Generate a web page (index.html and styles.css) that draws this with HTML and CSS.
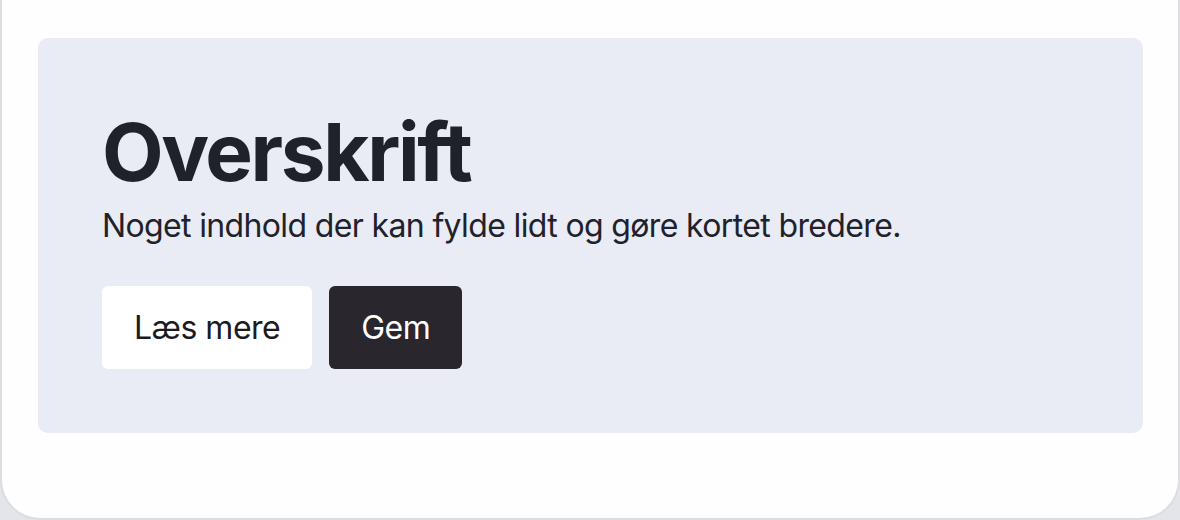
FILE: index.html
```html
<!DOCTYPE html>
<html lang="da">
<head>
<meta charset="utf-8">
<title>Kort</title>
<link rel="stylesheet" href="styles.css">
</head>
<body>
<div class="frame">
  <section class="card">
    <h1 class="card-title">Overskrift</h1>
    <p class="card-text">Noget indhold der kan fylde lidt og gøre kortet bredere.</p>
    <div class="card-actions">
      <button class="btn btn-light" type="button">Læs mere</button>
      <button class="btn btn-dark" type="button">Gem</button>
    </div>
  </section>
</div>
</body>
</html>
```

FILE: styles.css
```css
* { box-sizing: border-box; }

html, body {
  margin: 0;
  padding: 0;
}

body {
  width: 1180px;
  height: 520px;
  background: #e4e5ea;
  font-family: Inter, "Noto Sans", sans-serif;
  overflow: hidden;
}

.frame {
  width: 1180px;
  background: #fefdff;
  border: 2px solid #dcdde1;
  border-top: none;
  border-radius: 0 0 40px 40px;
  padding: 38px 35px 85px 36px;
}

.card {
  background: #e9ebf5;
  border-radius: 10px;
  padding: 64px;
}

.card-title {
  margin: 0;
  font-size: 80px;
  line-height: 100px;
  font-weight: 700;
  color: #1f222a;
  letter-spacing: -2.4px;
}

.card-text {
  margin: 0 0 36px;
  font-size: 32px;
  line-height: 48px;
  color: #1f222a;
  letter-spacing: -0.64px;
}

.card-actions {
  display: flex;
  gap: 17px;
}

.btn {
  height: 83px;
  padding: 0 32px;
  border: none;
  border-radius: 6px;
  font-family: inherit;
  font-size: 32px;
  font-weight: 400;
  letter-spacing: -0.5px;
  cursor: pointer;
}

.btn-light {
  background: #ffffff;
  color: #1b1b1f;
}

.btn-dark {
  background: #29262e;
  color: #ffffff;
}
```
